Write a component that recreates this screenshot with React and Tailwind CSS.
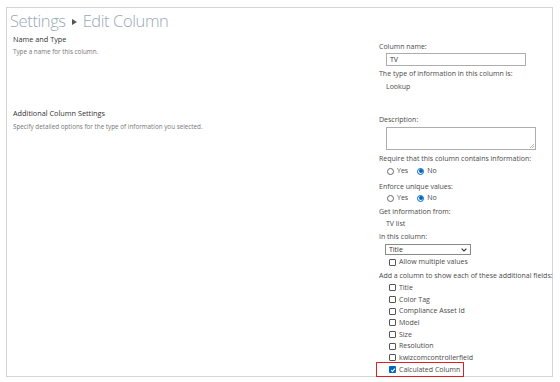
import React from 'react';

const fields = ['Title', 'Color Tag', 'Compliance Asset Id', 'Model', 'Size', 'Resolution', 'kwizcomcontrollerfield'];

function Radio({ checked }) {
  return checked ? (
    <span className="w-[7px] h-[7px] rounded-full border border-[#0067c0] flex items-center justify-center">
      <span className="w-[4px] h-[4px] rounded-full bg-[#0067c0]" />
    </span>
  ) : (
    <span className="w-[7px] h-[7px] rounded-full border border-[#666]" />
  );
}

function Check({ checked }) {
  if (checked) {
    return (
      <span className="w-[7px] h-[7px] rounded-[1px] bg-[#0067c0] flex items-center justify-center">
        <svg width="6" height="6" viewBox="0 0 10 10">
          <path d="M2 5.2 L4.2 7.4 L8.2 2.6" stroke="white" strokeWidth="1.8" fill="none" />
        </svg>
      </span>
    );
  }
  return <span className="w-[7px] h-[7px] rounded-[1px] border border-[#555] bg-white" />;
}

function YesNo() {
  return (
    <div className="h-[12px] flex items-center pl-[8px] gap-[3px]">
      <Radio />
      <span className="mr-[6px]">Yes</span>
      <Radio checked />
      <span>No</span>
    </div>
  );
}

export default function App() {
  return (
    <div className="w-[560px] h-[382px] bg-white pt-[7px] pl-[6px] overflow-hidden text-[#4a4a4a] text-[7px] leading-[10px]" style={{ fontFamily: '"Open Sans", "Noto Sans", sans-serif' }}>
      <div className="w-[547px] h-[370px] border border-[#d4d4d4] px-[3px]">
        <h1 className="mt-[1px] h-[24px] flex items-center gap-[6px] text-[16.5px] tracking-[-0.4px] font-light text-[#98a8b8] leading-[24px]">
          <span>Settings</span>
          <svg width="5" height="6" viewBox="0 0 5 6" className="mt-[2px]">
            <path d="M0 0 L5 3 L0 6 Z" fill="#555" />
          </svg>
          <span>Edit Column</span>
        </h1>

        <div className="flex">
          <div className="w-[369px] pt-[1px] pl-[3px]">
            <div className="text-[7.3px] text-[#333]">Name and Type</div>
            <div className="mt-[3px] text-[6.3px] text-[#777]">Type a name for this column.</div>
          </div>
          <div className="pt-[9px]">
            <div>Column name:</div>
            <div className="mt-[1px] ml-[7px] w-[140px] h-[13px] border border-[#adadad] px-[3px] flex items-center text-[#333]">TV</div>
            <div className="mt-[3px]">The type of information in this column is:</div>
            <div className="mt-[3px] ml-[7px]">Lookup</div>
          </div>
        </div>

        <div className="flex mt-[16px]">
          <div className="w-[369px] pl-[3px]">
            <div className="text-[7.3px] text-[#333]">Additional Column Settings</div>
            <div className="mt-[4px] text-[6.3px] text-[#777]">Specify detailed options for the type of information you selected.</div>
          </div>
          <div className="pt-[7px] w-[170px]">
            <div>Description:</div>
            <div className="relative mt-[2px] ml-[7px] w-[150px] h-[23px] border border-[#adadad]">
              <svg width="4" height="4" viewBox="0 0 4 4" className="absolute right-[1px] bottom-[1px]">
                <path d="M4 0 L0 4 M4 2 L2 4" stroke="#999" strokeWidth="0.6" />
              </svg>
            </div>
            <div className="mt-[4px]">Require that this column contains information:</div>
            <div className="mt-[1px]"><YesNo /></div>
            <div className="mt-[5px]">Enforce unique values:</div>
            <YesNo />
            <div className="mt-[3px]">Get information from:</div>
            <div className="mt-[2px] ml-[7px]">TV list</div>
            <div className="mt-[3px]">In this column:</div>
            <div className="mt-[2px] ml-[6px] w-[86px] h-[11px] border border-[#8a8a8a] px-[3px] flex items-center justify-between text-[#333]">
              <span>Title</span>
              <svg width="6" height="4" viewBox="0 0 6 4">
                <path d="M0.6 0.6 L3 3 L5.4 0.6" stroke="#333" strokeWidth="1.1" fill="none" />
              </svg>
            </div>
            <div className="mt-[2px] h-[10px] ml-[10px] flex items-center gap-[3px]">
              <Check />
              <span>Allow multiple values</span>
            </div>
            <div className="mt-[4px] whitespace-nowrap">Add a column to show each of these additional fields:</div>
            <div className="mt-[1px]">
              {fields.map((f) => (
                <div key={f} className="h-[11.7px] ml-[10px] flex items-center gap-[3px]">
                  <Check />
                  <span>{f}</span>
                </div>
              ))}
              <div className="relative h-[11.7px] ml-[10px] flex items-center gap-[3px]">
                <Check checked />
                <span>Calculated Column</span>
                <div className="absolute -left-[13px] -top-[2px] w-[88px] h-[15px] border-[1.5px] border-[#e02020]" />
              </div>
            </div>
          </div>
        </div>
      </div>
    </div>
  );
}
